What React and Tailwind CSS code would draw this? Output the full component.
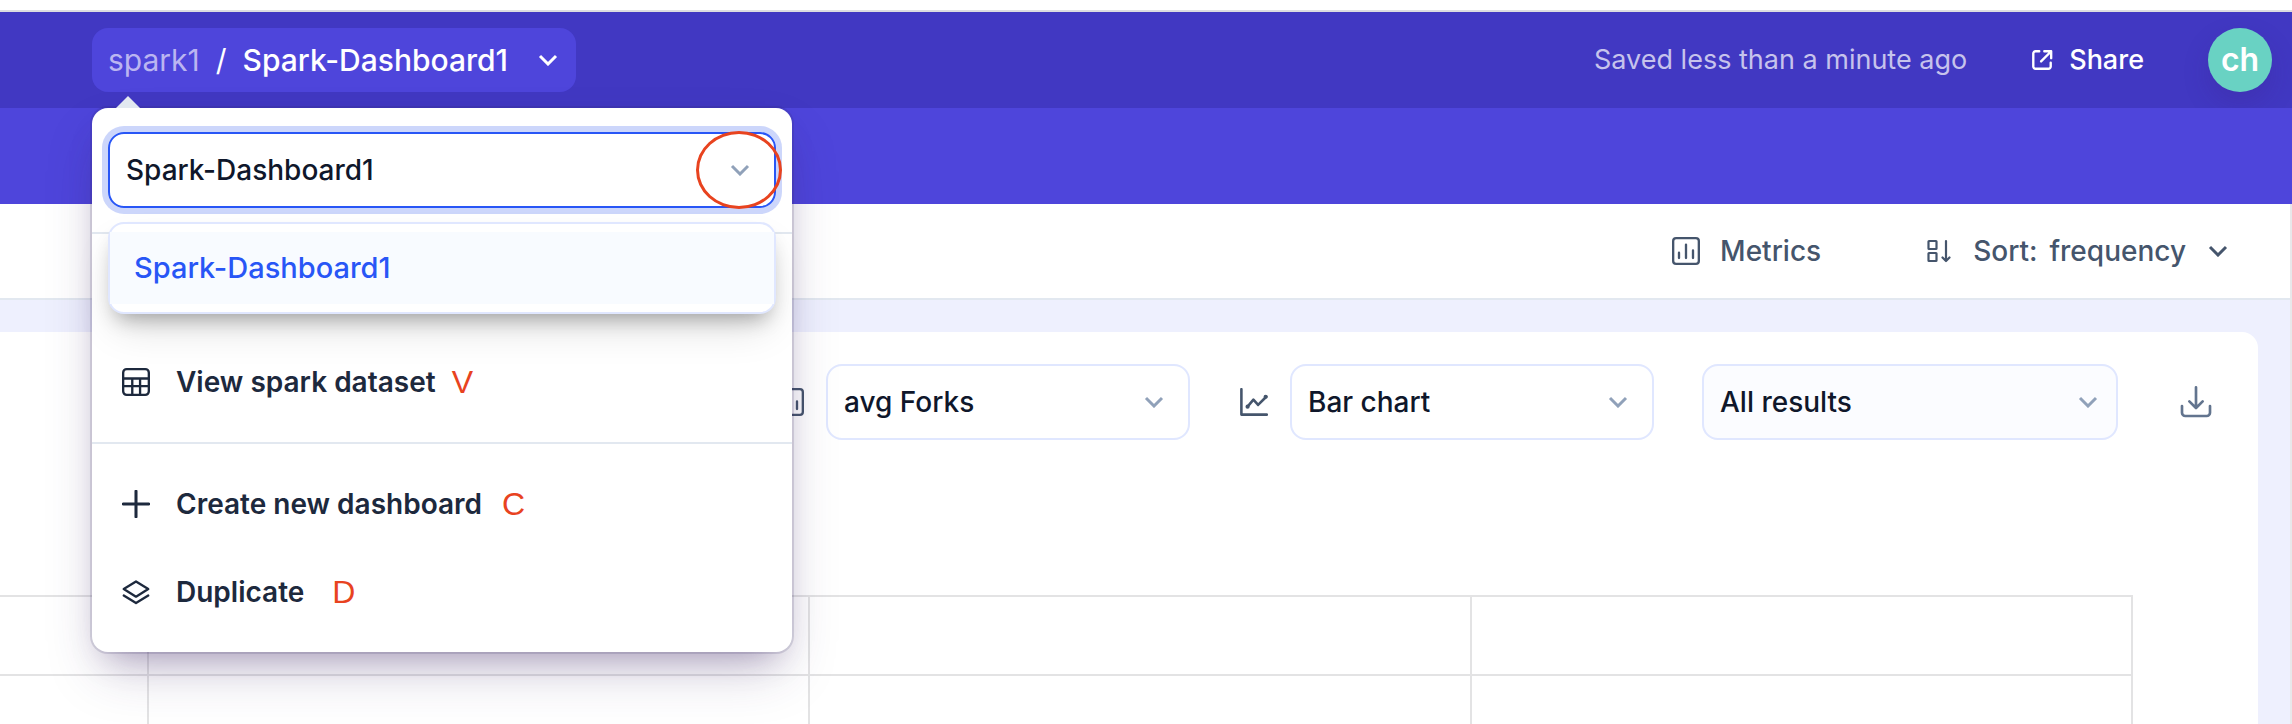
import React, { useState } from 'react';

const Icon = ({ className, children, strokeWidth = 2 }) => (
    <svg
        className={className}
        viewBox="0 0 24 24"
        fill="none"
        stroke="currentColor"
        strokeWidth={strokeWidth}
        strokeLinecap="round"
        strokeLinejoin="round"
        aria-hidden="true"
    >
        {children}
    </svg>
);

const Chevron = ({ className }) => (
    <svg className={className} viewBox="0 0 20 12" fill="none" stroke="currentColor" strokeWidth="3" aria-hidden="true">
        <path d="M2 2l8 8 8-8" />
    </svg>
);

const TableIcon = ({ className }) => (
    <Icon className={className}>
        <rect x="1" y="1" width="22" height="22" rx="3" />
        <path d="M1 9h22M1 15.5h22M8.8 9v14M15.5 9v14" />
    </Icon>
);

const PlusIcon = ({ className }) => (
    <Icon className={className} strokeWidth={2.6}>
        <path d="M12 1v22M1 12h22" />
    </Icon>
);

const LayersIcon = ({ className }) => (
    <Icon className={className}>
        <path d="M12 3L1.5 9.5 12 16l10.5-6.5z" />
        <path d="M1.5 15L12 21.500 22.500 15" />
    </Icon>
);

const MetricsIcon = ({ className }) => (
    <Icon className={className}>
        <rect x="1" y="1" width="22" height="22" rx="2.5" />
        <path d="M6 13.5V18M12 6.500V18M18 11.500V18" />
    </Icon>
);

const LineChartIcon = ({ className }) => (
    <Icon className={className} strokeWidth={2.2}>
        <path d="M1.200 1v21.800H23" />
        <path d="M6.500 16l5-6 4 4.500 7-7" />
        <circle cx="6.500" cy="16" r="0.700" />
        <circle cx="22" cy="7.500" r="0.700" />
    </Icon>
);

const SortIcon = ({ className }) => (
    <Icon className={className} strokeWidth={2.200}>
        <rect x="1.500" y="2" width="8" height="8" rx="0.500" />
        <rect x="1.500" y="14" width="8" height="8" rx="0.500" />
        <path d="M19 2v19.500M15.500 18.500l3.500 3.500 3.500-3.500" />
    </Icon>
);

const ShareIcon = ({ className }) => (
    <Icon className={className} strokeWidth={2.6}>
        <path d="M9 2.500H5A2.500 2.500 0 0 0 2.500 5v14A2.500 2.500 0 0 0 5 21.500h14a2.500 2.500 0 0 0 2.500-2.500v-4" />
        <path d="M14.500 2.500h7.500v7.500M21.500 3L11 13.500" />
    </Icon>
);

const DownloadIcon = ({ className }) => (
    <Icon className={className}>
        <path d="M1.500 15v5A2.500 2.500 0 0 0 4 22.500h16a2.500 2.500 0 0 0 2.500-2.500v-5" />
        <path d="M12 1v15M7 11.500l5 5 5-5" />
    </Icon>
);

const Select = ({ label, options, className, chevronClassName = 'right-[26px]' }) => (
    <div className={`relative h-[76px] ${className}`}>
        <select
            aria-label={label}
            className="h-full w-full appearance-none rounded-2xl border-2 border-indigo-100 bg-transparent pl-4 text-[28px] font-medium text-slate-900 outline-none"
        >
            {options.map((option) => (
                <option key={option}>{option}</option>
            ))}
        </select>
        <Chevron className={`pointer-events-none absolute top-8 h-3 w-5 text-slate-400 ${chevronClassName}`} />
    </div>
);

const MenuItem = ({ icon: ItemIcon, label, hotkey, hotkeyClassName }) => (
    <button type="button" className="flex h-[88px] w-full items-center px-[30px] text-left">
        <ItemIcon className="h-7 w-7 shrink-0" />
        <span className="ml-[26px] text-[28px] font-semibold">{label}</span>
        <kbd className={`font-['Liberation_Sans',Arial,sans-serif] text-[32px] text-[#e8431f] ${hotkeyClassName}`}>{hotkey}</kbd>
    </button>
);

const DashboardMenu = () => {
    const [name, setName] = useState('Spark-Dashboard1');

    return (
        <div className="absolute top-20 left-0 z-10 w-[700px] rounded-2xl bg-white text-slate-800 shadow-[0_0_0_2px_rgba(50,40,93,0.15),0_26px_54px_-10px_rgba(60,40,100,0.25),0_16px_32px_-16px_rgba(60,30,100,0.35)]">
            <div className="absolute -top-3 left-6 h-3 w-6 bg-slate-200 [clip-path:polygon(50%_0,100%_100%,0_100%)]" />

            <div className="relative border-b-2 border-slate-200 px-4 pt-6 pb-6">
                <input
                    aria-label="Dashboard"
                    value={name}
                    onChange={(e) => setName(e.target.value)}
                    className="block h-[76px] w-full rounded-2xl border-2 border-[#2856f6] pl-4 text-[28px] font-medium text-slate-900 ring-6 ring-[#ccd6fb] outline-none"
                />
                <Chevron className="pointer-events-none absolute top-14 right-[42px] h-3 w-5 text-slate-400" />
                <div className="pointer-events-none absolute top-[23px] right-[10px] h-[78px] w-[86px] rounded-[50%] border-3 border-[#e8431f]" />

                <div className="absolute top-[114px] right-4 left-4 rounded-2xl border-2 border-indigo-100 bg-white py-2 shadow-[0_20px_40px_-8px_rgba(0,0,0,0.15),0_12px_20px_-8px_rgba(0,0,0,0.3)]">
                    <button type="button" className="flex h-[72px] w-full items-center bg-[#f8fbff] px-6 text-left text-[29px] font-medium text-[#2856f6]">
                        Spark-Dashboard1
                    </button>
                </div>
            </div>

            <div className="border-b-2 border-slate-200 pt-[104px] pb-4">
                <MenuItem icon={TableIcon} label="View spark dataset" hotkey="V" hotkeyClassName="ml-4" />
            </div>
            <div className="py-4">
                <MenuItem icon={PlusIcon} label="Create new dashboard" hotkey="C" hotkeyClassName="ml-5" />
                <MenuItem icon={LayersIcon} label="Duplicate" hotkey="D" hotkeyClassName="ml-7" />
            </div>
        </div>
    );
};

const Header = () => (
    <header className="flex h-24 shrink-0 items-center justify-between bg-[#4138c2] pr-5 pl-[92px] text-white">
        <div className="relative">
            <button type="button" className="flex h-16 items-center gap-4 rounded-2xl bg-[#4e45db] pr-[18px] pl-4 text-[30px]">
                <span className="text-[#bbb5f1]">spark1</span>
                <span>/</span>
                <span className="font-medium">Spark-Dashboard1</span>
                <Chevron className="ml-[14px] h-3 w-5" />
            </button>
            <DashboardMenu />
        </div>
        <div className="flex items-center text-[27px]">
            <span className="text-[#c6c3ec]">Saved less than a minute ago</span>
            <button type="button" className="ml-16 flex items-center gap-4 font-medium">
                <ShareIcon className="h-[22px] w-[22px]" />
                Share
            </button>
            <span className="ml-16 flex h-16 w-16 items-center justify-center rounded-full bg-[#69d2c3] text-[32px] font-semibold shadow-[0_12px_24px_rgba(60,30,140,0.25)]">
                ch
            </span>
        </div>
    </header>
);

const Toolbar = () => (
    <div className="flex h-24 shrink-0 items-center justify-end border-b-2 border-slate-200 bg-white pr-[62px] text-[28px] font-medium text-slate-600">
        <button type="button" className="flex items-center gap-5">
            <MetricsIcon className="h-7 w-7" />
            Metrics
        </button>
        <button type="button" className="ml-[106px] flex items-center gap-[22px]">
            <SortIcon className="h-6 w-6" />
            <span className="flex gap-3">
                <span>Sort:</span>
                <span>frequency</span>
            </span>
            <Chevron className="h-3 w-5" />
        </button>
    </div>
);

const ChartGrid = () => (
    <div className="mr-[125px] grid flex-1 grid-cols-[147px_1fr_1fr_1fr] grid-rows-[79px_1fr] border-r-2 border-[#e3e3e4]">
        {[0, 1, 2, 3, 4, 5, 6, 7].map((cell) => (
            <div
                key={cell}
                className={`border-[#e3e3e4] border-t-2 ${cell % 4 === 0 ? '' : 'border-l-2'}`}
            />
        ))}
    </div>
);

const App = () => (
    <div className="flex h-screen flex-col overflow-hidden bg-white font-[Inter,sans-serif]">
        <div className="h-3 shrink-0 border-b-2 border-[#dcdce0]" />
        <Header />
        <div className="h-24 shrink-0 bg-[#4e45db]" />

        <main className="flex flex-1 flex-col border-r-2 border-[#e8e8ea]">
            <Toolbar />
            <div className="flex flex-1 flex-col bg-[#eef0fe] pt-8 pr-8">
                <section className="flex flex-1 flex-col rounded-tr-2xl bg-white">
                    <div className="flex items-center justify-end pt-8 pr-[46px] text-slate-600">
                        <MetricsIcon className="h-7 w-7" />
                        <Select label="Metric" options={['avg Forks']} className="ml-[22px] w-[364px]" />
                        <LineChartIcon className="ml-[50px] h-7 w-7" />
                        <Select label="Chart type" options={['Bar chart']} className="ml-[22px] w-[364px]" />
                        <Select
                            label="Results"
                            options={['All results']}
                            className="ml-12 w-[416px] rounded-2xl bg-[#fbfcff]"
                            chevronClassName="right-5"
                        />
                        <button type="button" aria-label="Download" className="ml-[62px] text-slate-500">
                            <DownloadIcon className="h-8 w-8" />
                        </button>
                    </div>
                    <div className="flex flex-1 flex-col pt-[155px]">
                        <ChartGrid />
                    </div>
                </section>
            </div>
        </main>
    </div>
);

export default App;
